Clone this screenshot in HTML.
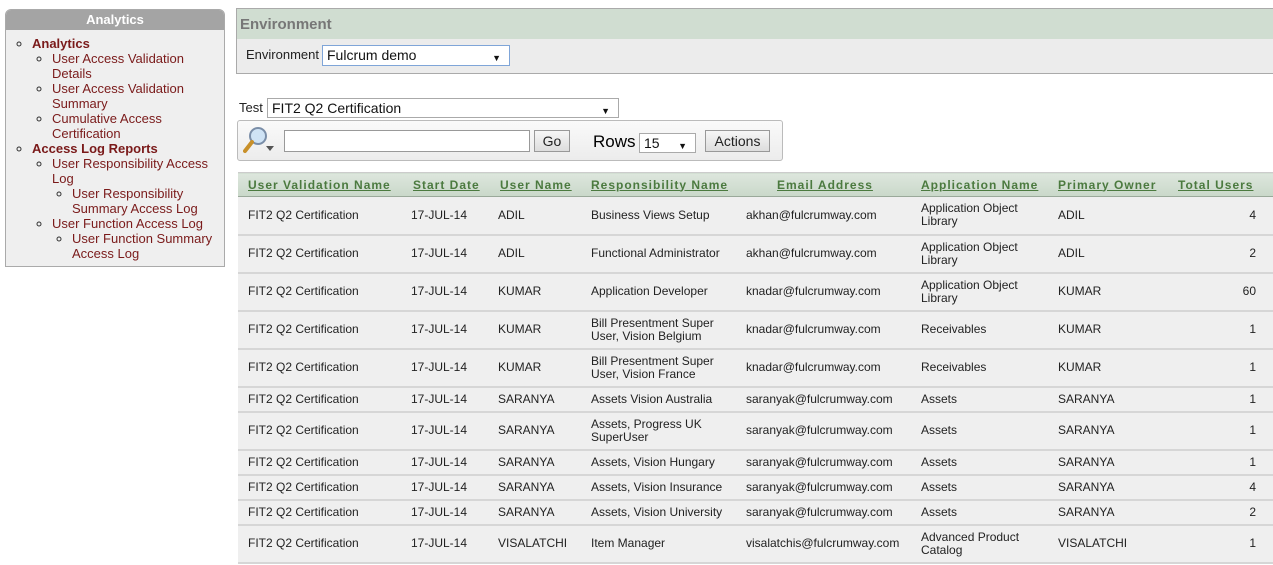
<!DOCTYPE html>
<html><head><meta charset="utf-8"><style>
*{box-sizing:border-box}
body{margin:0;width:1273px;height:565px;background:#fff;font-family:"Liberation Sans",Arial,sans-serif;position:relative;overflow:hidden}
.side{position:absolute;left:5px;top:9px;width:220px;height:258px;background:#efefef;border:1px solid #aaa;border-radius:6px 6px 0 0}
.side .hd{height:20px;background:#a4a4a4;color:#fff;font-weight:bold;font-size:13px;text-align:center;line-height:19px;border-radius:5px 5px 0 0}
.side ul{margin:0;padding-left:20px;list-style:circle;font-size:13px;line-height:15px;font-weight:normal}
.side>ul{padding-left:26px;margin-top:6px}
.side ul ul{padding-left:20px}
.side li{color:#7a1a1a}
.side li::marker{color:#333}
.b{font-weight:bold;color:#7a1010}
.env{position:absolute;left:236px;top:8px;width:1037px;height:66px;border:1px solid #aaa;border-right:none;background:#ececec}
.env .t{height:30px;background:#d0ddd1;font-weight:bold;color:#777;font-size:15px;padding:7px 0 0 3px}
.sel{position:absolute;background:#fff;border:1px solid #aaa;font-size:14px;color:#111;padding-left:4px}
.sel:after{content:"\25BC";position:absolute;right:8px;top:3px;font-size:9px}
.lab{position:absolute;font-size:13px;color:#222}
.bar{position:absolute;left:237px;top:120px;width:546px;height:41px;border:1px solid #bbb;border-radius:3px;background:linear-gradient(#fafafa,#ececec)}
.btn{position:absolute;border:1px solid #999;background:linear-gradient(#f6f6f6,#ddd);font-size:14px;text-align:center;color:#222}
table{position:absolute;left:238px;top:172px;border-collapse:collapse;table-layout:fixed;width:1035px;font-size:12px;color:#222}
th{height:24px;background:linear-gradient(#dde6dd,#c9d8c9);color:#4b7a3f;font-size:12px;letter-spacing:1px;text-decoration:underline;text-align:left;padding:0 0 0 10px;font-weight:bold;border-top:1px solid #ccc;border-bottom:1px solid #9aa99a}
td{background:#efefef;padding:0 0 0 10px;border-bottom:2px solid #d6d6d6;line-height:13px;vertical-align:middle}
td.n{text-align:right;padding-right:17px}
tr.h2 td{height:38px} tr.h1 td{height:25px}
</style></head><body>
<div class="side"><div class="hd">Analytics</div>
<ul><li class="b">Analytics
<ul><li>User Access Validation Details</li><li>User Access Validation Summary</li><li>Cumulative Access Certification</li></ul></li>
<li class="b">Access Log Reports
<ul><li>User Responsibility Access Log<ul><li>User Responsibility Summary Access Log</li></ul></li><li>User Function Access Log<ul><li>User Function Summary Access Log</li></ul></li></ul></li></ul></div>

<div class="env"><div class="t">Environment</div></div>
<div class="lab" style="left:246px;top:47px">Environment</div>
<div class="sel" style="left:322px;top:45px;width:188px;height:21px;border:1px solid #7fa5d8;line-height:19px">Fulcrum demo</div>

<div class="lab" style="left:239px;top:100px">Test</div>
<div class="sel" style="left:267px;top:98px;width:352px;height:20px;line-height:18px">FIT2 Q2 Certification</div>
<div class="bar">
<svg style="position:absolute;left:5px;top:4px" width="32" height="30" viewBox="0 0 32 30"><circle cx="15" cy="11" r="8" fill="#cfe3f5" stroke="#7a8ea8" stroke-width="2"/><line x1="9" y1="17" x2="2" y2="26" stroke="#c8902a" stroke-width="4" stroke-linecap="round"/><path d="M23 21h8l-4 5z" fill="#555"/></svg>
<div style="position:absolute;left:46px;top:9px;width:246px;height:22px;border:1px solid #999;background:#fff"></div>
<div class="btn" style="left:296px;top:9px;width:36px;height:22px;line-height:20px">Go</div>
<div style="position:absolute;left:355px;top:11px;font-size:17px">Rows</div>
<div class="sel" style="left:401px;top:12px;width:57px;height:20px;line-height:18px">15</div>
<div class="btn" style="left:467px;top:9px;width:65px;height:22px;line-height:20px">Actions</div>
</div>

<table>
<colgroup><col style="width:163px"><col style="width:87px"><col style="width:93px"><col style="width:155px"><col style="width:175px"><col style="width:137px"><col style="width:120px"><col style="width:105px"></colgroup>
<tr><th>User Validation Name</th><th style="padding-left:12px">Start Date</th><th style="padding-left:12px">User Name</th><th>Responsibility Name</th><th style="padding-left:41px">Email Address</th><th>Application Name</th><th>Primary Owner</th><th>Total Users</th></tr>
<tr class="h2"><td>FIT2 Q2 Certification</td><td>17-JUL-14</td><td>ADIL</td><td>Business Views Setup</td><td>akhan@fulcrumway.com</td><td>Application Object Library</td><td>ADIL</td><td class="n">4</td></tr>
<tr class="h2"><td>FIT2 Q2 Certification</td><td>17-JUL-14</td><td>ADIL</td><td>Functional Administrator</td><td>akhan@fulcrumway.com</td><td>Application Object Library</td><td>ADIL</td><td class="n">2</td></tr>
<tr class="h2"><td>FIT2 Q2 Certification</td><td>17-JUL-14</td><td>KUMAR</td><td>Application Developer</td><td>knadar@fulcrumway.com</td><td>Application Object Library</td><td>KUMAR</td><td class="n">60</td></tr>
<tr class="h2"><td>FIT2 Q2 Certification</td><td>17-JUL-14</td><td>KUMAR</td><td>Bill Presentment Super User, Vision Belgium</td><td>knadar@fulcrumway.com</td><td>Receivables</td><td>KUMAR</td><td class="n">1</td></tr>
<tr class="h2"><td>FIT2 Q2 Certification</td><td>17-JUL-14</td><td>KUMAR</td><td>Bill Presentment Super User, Vision France</td><td>knadar@fulcrumway.com</td><td>Receivables</td><td>KUMAR</td><td class="n">1</td></tr>
<tr class="h1"><td>FIT2 Q2 Certification</td><td>17-JUL-14</td><td>SARANYA</td><td>Assets Vision Australia</td><td>saranyak@fulcrumway.com</td><td>Assets</td><td>SARANYA</td><td class="n">1</td></tr>
<tr class="h2"><td>FIT2 Q2 Certification</td><td>17-JUL-14</td><td>SARANYA</td><td>Assets, Progress UK SuperUser</td><td>saranyak@fulcrumway.com</td><td>Assets</td><td>SARANYA</td><td class="n">1</td></tr>
<tr class="h1"><td>FIT2 Q2 Certification</td><td>17-JUL-14</td><td>SARANYA</td><td>Assets, Vision Hungary</td><td>saranyak@fulcrumway.com</td><td>Assets</td><td>SARANYA</td><td class="n">1</td></tr>
<tr class="h1"><td>FIT2 Q2 Certification</td><td>17-JUL-14</td><td>SARANYA</td><td>Assets, Vision Insurance</td><td>saranyak@fulcrumway.com</td><td>Assets</td><td>SARANYA</td><td class="n">4</td></tr>
<tr class="h1"><td>FIT2 Q2 Certification</td><td>17-JUL-14</td><td>SARANYA</td><td>Assets, Vision University</td><td>saranyak@fulcrumway.com</td><td>Assets</td><td>SARANYA</td><td class="n">2</td></tr>
<tr class="h2"><td>FIT2 Q2 Certification</td><td>17-JUL-14</td><td>VISALATCHI</td><td>Item Manager</td><td>visalatchis@fulcrumway.com</td><td>Advanced Product Catalog</td><td>VISALATCHI</td><td class="n">1</td></tr>
</table>
</body></html>
